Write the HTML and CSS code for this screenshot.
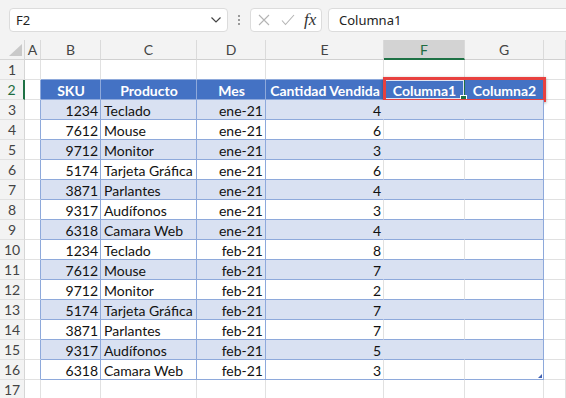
FILE: index.html
```html
<!DOCTYPE html>
<html lang="es">
<head>
    <meta charset="UTF-8">
    <title>Tabla de ventas</title>
    <link rel="stylesheet" href="styles.css">
</head>
<body>
    <div class="bar">
        <div class="namebox">
            <span>F2</span>
            <svg width="12" height="8" viewBox="0 0 12 8"><path d="M1.5 1.5 L6 6 L10.5 1.5" fill="none" stroke="#444" stroke-width="1.2"/></svg>
        </div>
        <div class="grip"><i></i><i></i><i></i></div>
        <div class="fxbox">
            <svg width="12" height="12" viewBox="0 0 12 12"><path d="M1 1 L11 11 M11 1 L1 11" stroke="#b4b4b4" stroke-width="1.1"/></svg>
            <svg width="14" height="12" viewBox="0 0 14 12"><path d="M1 6.5 L4.5 10.5 L13 1" fill="none" stroke="#b4b4b4" stroke-width="1.1"/></svg>
            <span class="fx">fx</span>
        </div>
        <div class="formula">Columna1</div>
    </div>

    <div class="sheet">
        <div class="row hdr">
            <div class="corner"><span class="tri"></span></div>
            <div class="ch">A</div><div class="ch">B</div><div class="ch">C</div><div class="ch">D</div>
            <div class="ch">E</div><div class="ch sel">F</div><div class="ch">G</div><div class="ch"></div>
        </div>

        <div class="row">
            <div class="rh">1</div>
            <div class="c"></div><div class="c t"></div><div class="c t"></div><div class="c t"></div>
            <div class="c t"></div><div class="c t"></div><div class="c t"></div><div class="c"></div>
        </div>

        <div class="row hd">
            <div class="rh on">2</div>
            <div class="c v"></div>
            <div class="c t v">SKU</div>
            <div class="c t v">Producto</div>
            <div class="c t v">Mes</div>
            <div class="c t">Cantidad Vendida</div>
            <div class="c t act">Columna1</div>
            <div class="c t">Columna2</div>
            <div class="c"></div>
            <div class="note"></div>
        </div>

        <div class="row band">
            <div class="rh">3</div><div class="c v"></div>
            <div class="c t v num">1234</div><div class="c t v">Teclado</div><div class="c t v num">ene-21</div>
            <div class="c t num">4</div><div class="c t"></div><div class="c t v"></div><div class="c"></div>
        </div>
        <div class="row">
            <div class="rh">4</div><div class="c v"></div>
            <div class="c t v num">7612</div><div class="c t v">Mouse</div><div class="c t v num">ene-21</div>
            <div class="c t num">6</div><div class="c t"></div><div class="c t v"></div><div class="c"></div>
        </div>
        <div class="row band">
            <div class="rh">5</div><div class="c v"></div>
            <div class="c t v num">9712</div><div class="c t v">Monitor</div><div class="c t v num">ene-21</div>
            <div class="c t num">3</div><div class="c t"></div><div class="c t v"></div><div class="c"></div>
        </div>
        <div class="row">
            <div class="rh">6</div><div class="c v"></div>
            <div class="c t v num">5174</div><div class="c t v">Tarjeta Gráfica</div><div class="c t v num">ene-21</div>
            <div class="c t num">6</div><div class="c t"></div><div class="c t v"></div><div class="c"></div>
        </div>
        <div class="row band">
            <div class="rh">7</div><div class="c v"></div>
            <div class="c t v num">3871</div><div class="c t v">Parlantes</div><div class="c t v num">ene-21</div>
            <div class="c t num">4</div><div class="c t"></div><div class="c t v"></div><div class="c"></div>
        </div>
        <div class="row">
            <div class="rh">8</div><div class="c v"></div>
            <div class="c t v num">9317</div><div class="c t v">Audífonos</div><div class="c t v num">ene-21</div>
            <div class="c t num">3</div><div class="c t"></div><div class="c t v"></div><div class="c"></div>
        </div>
        <div class="row band">
            <div class="rh">9</div><div class="c v"></div>
            <div class="c t v num">6318</div><div class="c t v">Camara Web</div><div class="c t v num">ene-21</div>
            <div class="c t num">4</div><div class="c t"></div><div class="c t v"></div><div class="c"></div>
        </div>
        <div class="row">
            <div class="rh">10</div><div class="c v"></div>
            <div class="c t v num">1234</div><div class="c t v">Teclado</div><div class="c t v num">feb-21</div>
            <div class="c t num">8</div><div class="c t"></div><div class="c t v"></div><div class="c"></div>
        </div>
        <div class="row band">
            <div class="rh">11</div><div class="c v"></div>
            <div class="c t v num">7612</div><div class="c t v">Mouse</div><div class="c t v num">feb-21</div>
            <div class="c t num">7</div><div class="c t"></div><div class="c t v"></div><div class="c"></div>
        </div>
        <div class="row">
            <div class="rh">12</div><div class="c v"></div>
            <div class="c t v num">9712</div><div class="c t v">Monitor</div><div class="c t v num">feb-21</div>
            <div class="c t num">2</div><div class="c t"></div><div class="c t v"></div><div class="c"></div>
        </div>
        <div class="row band">
            <div class="rh">13</div><div class="c v"></div>
            <div class="c t v num">5174</div><div class="c t v">Tarjeta Gráfica</div><div class="c t v num">feb-21</div>
            <div class="c t num">7</div><div class="c t"></div><div class="c t v"></div><div class="c"></div>
        </div>
        <div class="row">
            <div class="rh">14</div><div class="c v"></div>
            <div class="c t v num">3871</div><div class="c t v">Parlantes</div><div class="c t v num">feb-21</div>
            <div class="c t num">7</div><div class="c t"></div><div class="c t v"></div><div class="c"></div>
        </div>
        <div class="row band">
            <div class="rh">15</div><div class="c v"></div>
            <div class="c t v num">9317</div><div class="c t v">Audífonos</div><div class="c t v num">feb-21</div>
            <div class="c t num">5</div><div class="c t"></div><div class="c t v"></div><div class="c"></div>
        </div>
        <div class="row">
            <div class="rh">16</div><div class="c v"></div>
            <div class="c t v num">6318</div><div class="c t v">Camara Web</div><div class="c t v num">feb-21</div>
            <div class="c t num">3</div><div class="c t"></div><div class="c t v end"></div><div class="c"></div>
        </div>
        <div class="row">
            <div class="rh">17</div><div class="c"></div>
            <div class="c"></div><div class="c"></div><div class="c"></div>
            <div class="c"></div><div class="c"></div><div class="c"></div><div class="c"></div>
        </div>
    </div>
</body>
</html>
```

FILE: styles.css
```css
* {
    box-sizing: border-box;
    margin: 0;
    padding: 0;
}

body {
    font-family: Lato, "Liberation Sans", sans-serif;
    background: #fff;
    color: #111;
    width: 566px;
    height: 398px;
    overflow: hidden;
}

/* formula bar */
.bar {
    display: flex;
    align-items: center;
    height: 40px;
    padding-left: 9px;
    background: #f3f3f3;
    font-family: "Noto Sans", sans-serif;
    font-size: 13px;
    color: #222;
}

.namebox {
    flex: 0 0 219px;
    height: 24px;
    background: #fff;
    border: 1px solid #dcdcdc;
    border-radius: 4px;
    display: flex;
    align-items: center;
    justify-content: space-between;
    padding: 0 5px 0 6px;
}

.grip {
    flex: 0 0 22px;
    display: flex;
    flex-direction: column;
    align-items: center;
    gap: 2px;
}

.grip i {
    width: 2px;
    height: 2px;
    background: #9a9a9a;
}

.fxbox {
    flex: 0 0 72px;
    height: 24px;
    background: #fff;
    border: 1px solid #dcdcdc;
    border-radius: 4px;
    display: flex;
    align-items: center;
    gap: 11px;
    padding-left: 7px;
}

.fx {
    font-family: "Liberation Serif", serif;
    font-style: italic;
    font-size: 17px;
    color: #333;
    margin-left: -2px;
}

.formula {
    flex: 0 0 260px;
    margin-left: 6px;
    height: 24px;
    background: #fff;
    border: 1px solid #dcdcdc;
    border-radius: 4px;
    display: flex;
    align-items: center;
    padding-left: 10px;
}

/* sheet grid */
.sheet {
    position: relative;
}

.row {
    position: relative;
    display: grid;
    grid-template-columns: 25px 16px 60px 96px 69px 118px 81px 79px 1fr;
    height: 20px;
    font-size: 14px;
}

.hdr {
    background: #f3f3f3;
    color: #444;
}

.corner {
    display: flex;
    justify-content: flex-end;
    align-items: flex-end;
    padding: 0 2px 3px 0;
    border-right: 1px solid #d6d6d6;
    border-bottom: 1px solid #d6d6d6;
}

.tri {
    width: 0;
    height: 0;
    border-left: 13px solid transparent;
    border-bottom: 12px solid #c9c9c9;
}

.ch {
    display: flex;
    align-items: center;
    justify-content: center;
    border-right: 1px solid #dadada;
    border-bottom: 1px solid #d0d0d0;
}

.ch.sel {
    background: #d3d3d3;
    color: #1e6c41;
    border-bottom: 2px solid #1e7145;
}

.rh {
    display: flex;
    align-items: center;
    justify-content: center;
    background: #f3f3f3;
    color: #444;
    border-right: 1px solid #d6d6d6;
    border-bottom: 1px solid #e1e1e1;
}

.rh.on {
    color: #1e6c41;
    border-right: 2px solid #1e7145;
}

.c {
    display: flex;
    align-items: center;
    padding: 1px 2px 0 3px;
    white-space: nowrap;
    border-right: 1px solid #e1e1e1;
    border-bottom: 1px solid #e1e1e1;
}

.num {
    justify-content: flex-end;
}

/* table styling */
.t {
    border-bottom-color: #8ea9db;
}

.band .t {
    background: #d9e1f2;
    border-right-color: #d9e1f2;
}

.hd .t {
    background: #4472c4;
    border-right-color: #4472c4;
    color: #fff;
    font-weight: bold;
    justify-content: center;
}

.row .v {
    border-right-color: #8ea9db;
}

.act {
    position: relative;
    box-shadow: inset 0 0 0 1px #dfe5f2;
}

.hd .act {
    border-right-color: #1e7145;
}

.act::after {
    content: "";
    position: absolute;
    right: -3px;
    bottom: -2px;
    width: 5px;
    height: 4px;
    background: #1e7145;
    border: 1px solid #fff;
}

.end {
    position: relative;
}

.end::after {
    content: "";
    position: absolute;
    right: 1px;
    bottom: 1px;
    border-left: 4px solid transparent;
    border-bottom: 4px solid #3f5fb0;
}

.note {
    position: absolute;
    left: 383px;
    top: -3px;
    width: 163px;
    height: 25px;
    border: 3px solid #e8413f;
    box-shadow: 0 1px 3px rgba(0, 0, 0, 0.35);
}
```
